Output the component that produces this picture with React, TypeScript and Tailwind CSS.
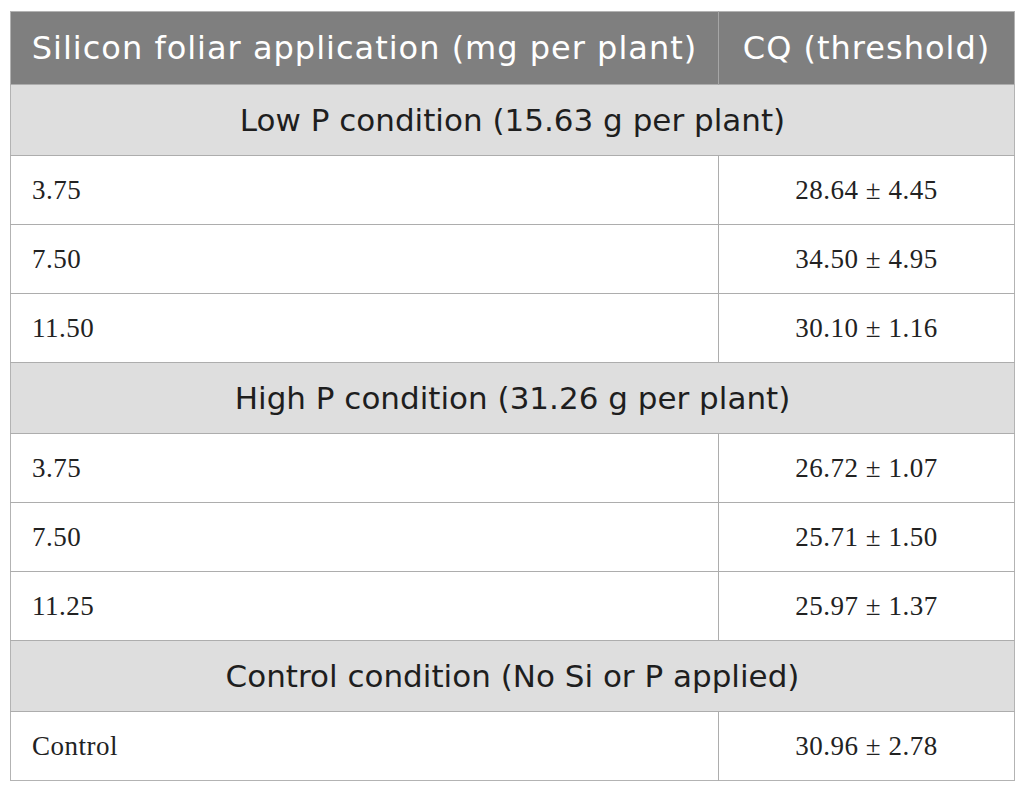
const groups = [
  {
    title: "Low P condition (15.63 g per plant)",
    rows: [
      ["3.75", "28.64 ± 4.45"],
      ["7.50", "34.50 ± 4.95"],
      ["11.50", "30.10 ± 1.16"],
    ],
  },
  {
    title: "High P condition (31.26 g per plant)",
    rows: [
      ["3.75", "26.72 ± 1.07"],
      ["7.50", "25.71 ± 1.50"],
      ["11.25", "25.97 ± 1.37"],
    ],
  },
  {
    title: "Control condition (No Si or P applied)",
    rows: [["Control", "30.96 ± 2.78"]],
  },
];

export default function App() {
  return (
    <div className="w-[1025px] h-[794px] bg-white pt-[11px] pl-[10px]">
      <table className="w-[1005px] border-collapse border border-[#b3b3b3]">
        <thead>
          <tr className="h-[73px] bg-[#7f7f7f] text-white font-['DejaVu_Sans',sans-serif] text-[32px] tracking-[1px]">
            <th className="w-[708px] font-normal text-center border-r border-[#a6a6a6]">
              Silicon foliar application (mg per plant)
            </th>
            <th className="font-normal text-center">CQ (threshold)</th>
          </tr>
        </thead>
        <tbody>
          {groups.map((g) => (
            <>
              <tr key={g.title} className="h-[71px] bg-[#dedede] border-t border-[#adadad]">
                <td colSpan={2} className="text-center text-[#1e1e1e] font-['DejaVu_Sans',sans-serif] text-[31px]">
                  {g.title}
                </td>
              </tr>
              {g.rows.map((r, i) => (
                <tr key={g.title + i} className="h-[69px] border-t border-[#adadad] font-['Liberation_Serif',serif] text-[27px] tracking-[0.5px] text-[#222]">
                  <td className="pl-[21px] border-r border-[#adadad]">{r[0]}</td>
                  <td className="text-center">{r[1]}</td>
                </tr>
              ))}
            </>
          ))}
        </tbody>
      </table>
    </div>
  );
}
